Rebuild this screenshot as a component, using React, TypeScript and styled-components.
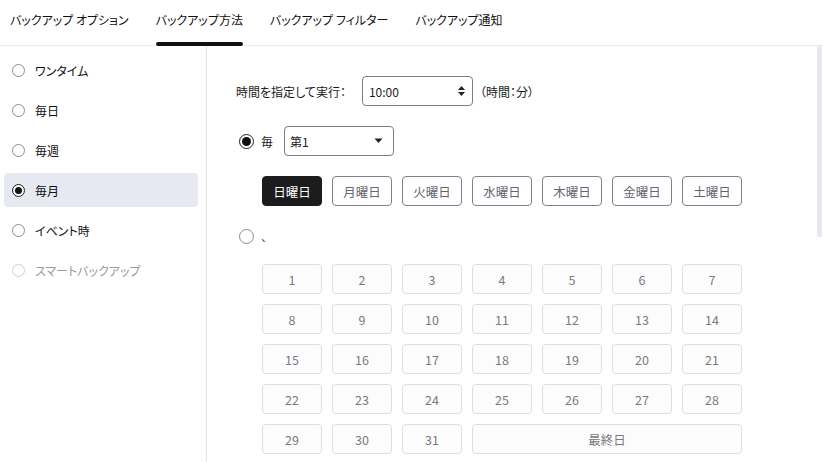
import styled, { createGlobalStyle } from "styled-components";

const GlobalStyle = createGlobalStyle`
  html, body {
    margin: 0;
    padding: 0;
    background: #ffffff;
  }
  body {
    font-family: "Noto Sans CJK JP", "Liberation Sans", sans-serif;
    font-size: 12px;
    font-feature-settings: "palt";
    color: #1a1a1a;
  }
`;

const Page = styled.div`
  position: relative;
  width: 823px;
  height: 462px;
  overflow: hidden;
  display: flex;
  flex-direction: column;
`;

const TabBar = styled.nav`
  display: flex;
  gap: 27px;
  padding-left: 10px;
  border-bottom: 1px solid #e8e8f0;
  box-sizing: border-box;
  height: 46px;
`;

const Tab = styled.div<{ $active?: boolean }>`
  position: relative;
  display: flex;
  align-items: center;
  padding-bottom: 6px;
  font-size: 12px;
  color: #111;
  white-space: nowrap;

  &::after {
    content: "";
    display: ${(p) => (p.$active ? "block" : "none")};
    position: absolute;
    left: 0;
    right: 0;
    bottom: -1px;
    height: 4px;
    border-radius: 2px;
    background: #111;
  }
`;

const Body = styled.div`
  flex: 1;
  display: flex;
  min-height: 0;
`;

const Sidebar = styled.aside`
  width: 207px;
  flex-shrink: 0;
  border-right: 1px solid #e4e4e8;
  padding: 7px 8px 0 4px;
  box-sizing: border-box;
  display: flex;
  flex-direction: column;
  gap: 6px;
`;

const SideItem = styled.div<{ $active?: boolean; $disabled?: boolean }>`
  height: 34px;
  display: flex;
  align-items: center;
  gap: 10px;
  padding-left: 8px;
  border-radius: 4px;
  background: ${(p) => (p.$active ? "#e6e8f2" : "transparent")};
  color: ${(p) => (p.$disabled ? "#9a9a9a" : "#111")};
`;

const Radio = styled.span<{ $checked?: boolean; $disabled?: boolean }>`
  width: 13px;
  height: 13px;
  box-sizing: border-box;
  border-radius: 50%;
  border: 1px solid
    ${(p) => (p.$checked ? "#222" : p.$disabled ? "#cfcfd4" : "#8a8a94")};
  background: #fff;
  display: inline-flex;
  align-items: center;
  justify-content: center;
  flex-shrink: 0;

  &::after {
    content: "";
    display: ${(p) => (p.$checked ? "block" : "none")};
    width: 7px;
    height: 7px;
    border-radius: 50%;
    background: #111;
  }
`;

const LargeRadio = styled(Radio)`
  width: 15px;
  height: 15px;

  &::after {
    width: 9px;
    height: 9px;
  }
`;

const Content = styled.main`
  flex: 1;
  padding: 30px 0 0 29px;
  display: flex;
  flex-direction: column;
`;

const Row = styled.div`
  display: flex;
  align-items: center;
  height: 30px;
`;

const Label = styled.span`
  white-space: nowrap;
`;

const TimeBox = styled.div`
  width: 111px;
  height: 30px;
  box-sizing: border-box;
  margin: 0 7px 0 16px;
  border: 1px solid #7c7c88;
  border-radius: 4px;
  display: flex;
  align-items: center;
  justify-content: space-between;
  padding: 0 6px 0 6px;
`;

const SelectBox = styled(TimeBox)`
  width: 110px;
  margin: 0 0 0 4px;
  padding: 0 10px 0 5px;
`;

const ChoiceRow = styled(Row)`
  margin-top: 20px;
  padding-left: 3px;
  gap: 7px;
`;

const Indent = styled.div`
  padding-left: 26px;
`;

const WeekRow = styled(Indent)`
  margin-top: 20px;
  display: grid;
  grid-template-columns: repeat(7, 60px);
  gap: 10px;
`;

const DayButton = styled.div<{ $selected?: boolean }>`
  height: 30px;
  box-sizing: border-box;
  border-radius: 4px;
  display: flex;
  align-items: center;
  justify-content: center;
  font-size: 12.5px;
  border: 1px solid ${(p) => (p.$selected ? "#1c1c1e" : "#80808c")};
  background: ${(p) => (p.$selected ? "#1c1c1e" : "#fff")};
  color: ${(p) => (p.$selected ? "#fff" : "#666670")};
`;

const DateGrid = styled(Indent)`
  margin-top: 18px;
  display: grid;
  grid-template-columns: repeat(7, 60px);
  grid-auto-rows: 30px;
  gap: 10px;
`;

const DateCell = styled.div<{ $span?: number }>`
  grid-column: span ${(p) => p.$span ?? 1};
  box-sizing: border-box;
  border: 1px solid #dedee2;
  border-radius: 4px;
  background: #fcfcfc;
  color: #7a7a80;
  display: flex;
  align-items: center;
  justify-content: center;
  font-size: 12.5px;
`;

const RadioRow = styled(Row)`
  margin-top: 20px;
  height: 20px;
  padding-left: 3px;
  gap: 7px;
  color: #555;
`;

const ScrollThumb = styled.div`
  position: absolute;
  right: 1px;
  top: 46px;
  width: 5px;
  height: 191px;
  border-radius: 3px;
  background: #e6e8f2;
`;

const sideItems = [
  { label: "ワンタイム" },
  { label: "毎日" },
  { label: "毎週" },
  { label: "毎月", active: true },
  { label: "イベント時" },
  { label: "スマートバックアップ", disabled: true },
];

const weekdays = ["日曜日", "月曜日", "火曜日", "水曜日", "木曜日", "金曜日", "土曜日"];

const dates = Array.from({ length: 31 }, (_, i) => i + 1);

function Spinner() {
  return (
    <svg width="9" height="12" viewBox="0 0 9 12">
      <path d="M4.5 1 L8 5 H1 Z" fill="#222" />
      <path d="M4.5 11 L8 7 H1 Z" fill="#222" />
    </svg>
  );
}

function Caret() {
  return (
    <svg width="9" height="6" viewBox="0 0 9 6">
      <path d="M0.5 0.5 H8.5 L4.5 5 Z" fill="#222" />
    </svg>
  );
}

export default function App() {
  return (
    <Page>
      <GlobalStyle />
      <TabBar>
        <Tab>バックアップ オプション</Tab>
        <Tab $active>バックアップ方法</Tab>
        <Tab>バックアップ フィルター</Tab>
        <Tab>バックアップ通知</Tab>
      </TabBar>
      <Body>
        <Sidebar>
          {sideItems.map((item) => (
            <SideItem key={item.label} $active={item.active} $disabled={item.disabled}>
              <Radio $checked={item.active} $disabled={item.disabled} />
              {item.label}
            </SideItem>
          ))}
        </Sidebar>
        <Content>
          <Row>
            <Label>時間を指定して実行：</Label>
            <TimeBox>
              <span>10:00</span>
              <Spinner />
            </TimeBox>
            <Label>（時間：分）</Label>
          </Row>
          <ChoiceRow>
            <LargeRadio $checked />
            <Label>毎</Label>
            <SelectBox>
              <span>第1</span>
              <Caret />
            </SelectBox>
          </ChoiceRow>
          <WeekRow>
            {weekdays.map((d, i) => (
              <DayButton key={d} $selected={i === 0}>
                {d}
              </DayButton>
            ))}
          </WeekRow>
          <RadioRow>
            <LargeRadio />
            <Label>、</Label>
          </RadioRow>
          <DateGrid>
            {dates.map((d) => (
              <DateCell key={d}>{d}</DateCell>
            ))}
            <DateCell $span={4}>最終日</DateCell>
          </DateGrid>
        </Content>
      </Body>
      <ScrollThumb />
    </Page>
  );
}
